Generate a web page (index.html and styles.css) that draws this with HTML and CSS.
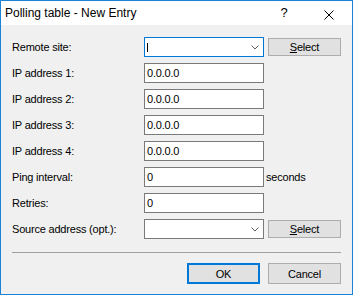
FILE: index.html
```html
<!doctype html>
<html lang="en">
  <head>
    <meta charset="UTF-8" />
    <title>Polling table - New Entry</title>
    <link rel="stylesheet" href="styles.css">
  </head>
  <body>
    <div class="window">
      <div class="titlebar">
        <span class="title">Polling table - New Entry</span>
        <span class="caption-btn help">?</span>
        <span class="caption-btn close">
          <svg width="10" height="10" viewBox="0 0 10 10"><path d="M0.5 0.5 L9.5 9.5 M9.5 0.5 L0.5 9.5" stroke="#000" stroke-width="1" fill="none"/></svg>
        </span>
      </div>
      <div class="content">
        <div class="form">
          <label>Remote site:</label>
          <div class="combo focused">
            <span class="caret"></span>
            <svg class="chevron" width="8" height="5" viewBox="0 0 8 5"><path d="M0.5 0.5 L4 4 L7.5 0.5" stroke="#606060" fill="none"/></svg>
          </div>
          <button class="btn side"><u>S</u>elect</button>

          <label>IP address 1:</label>
          <input type="text" value="0.0.0.0" />
          <span></span>

          <label>IP address 2:</label>
          <input type="text" value="0.0.0.0" />
          <span></span>

          <label>IP address 3:</label>
          <input type="text" value="0.0.0.0" />
          <span></span>

          <label>IP address 4:</label>
          <input type="text" value="0.0.0.0" />
          <span></span>

          <label>Ping interval:</label>
          <input type="text" value="0" />
          <span class="unit">seconds</span>

          <label>Retries:</label>
          <input type="text" value="0" />
          <span></span>

          <label>Source address (opt.):</label>
          <div class="combo">
            <span></span>
            <svg class="chevron" width="8" height="5" viewBox="0 0 8 5"><path d="M0.5 0.5 L4 4 L7.5 0.5" stroke="#606060" fill="none"/></svg>
          </div>
          <button class="btn side"><u>S</u>elect</button>
        </div>

        <div class="separator"></div>

        <div class="actions">
          <button class="btn default">OK</button>
          <button class="btn">Cancel</button>
        </div>
      </div>
    </div>
  </body>
</html>
```

FILE: styles.css
```css
body {
  margin: 0;
  font-family: "Liberation Sans", Arial, sans-serif;
  background-color: #f0f0f0;
}

.window {
  width: 353px;
  height: 295px;
  box-sizing: border-box;
  border: 1px solid #1883d7;
  background-color: #f0f0f0;
}

.titlebar {
  display: flex;
  align-items: center;
  height: 24px;
  background-color: white;
}

.title {
  flex: 1;
  padding-left: 4px;
  font-size: 12px;
  color: #000;
}

.caption-btn {
  width: 46px;
  height: 24px;
  display: flex;
  justify-content: center;
  align-items: center;
}

.help {
  font-size: 13px;
  padding-left: 2px;
  box-sizing: border-box;
  padding-bottom: 1px;
}

.close svg {
  margin-top: 3px;
}

.content {
  padding: 12px 11px 0 11px;
}

.form {
  display: grid;
  grid-template-columns: 132px 120px auto;
  grid-auto-rows: 20px;
  row-gap: 6px;
  align-items: center;
}

label {
  font-size: 11px;
  letter-spacing: -0.2px;
  color: #000;
}

input,
.combo {
  width: 120px;
  height: 20px;
  box-sizing: border-box;
  border: 1px solid #7a7a7a;
  background-color: white;
  margin: 0;
}

input {
  padding: 0 0 0 2px;
  font-family: "Liberation Sans", Arial, sans-serif;
  font-size: 11px;
  letter-spacing: -0.2px;
  color: #000;
  outline: none;
}

.combo {
  display: flex;
  justify-content: space-between;
  align-items: center;
  padding: 0 4px 0 2px;
}

.combo.focused {
  border-color: #0078d7;
}

.caret {
  width: 1px;
  height: 9px;
  background-color: #000;
}

.chevron {
  margin-top: 1px;
}

.unit {
  font-size: 11px;
  letter-spacing: -0.2px;
  margin-left: 2px;
}

.btn {
  width: 73px;
  height: 21px;
  box-sizing: border-box;
  border: 1px solid #adadad;
  background-color: #e1e1e1;
  font-family: "Liberation Sans", Arial, sans-serif;
  font-size: 11px;
  letter-spacing: -0.2px;
  color: #000;
  padding: 0;
  margin: 0;
}

.btn.side {
  height: 18px;
  margin-left: 4px;
  align-self: start;
  margin-top: 1px;
}

.btn.default {
  border: 2px solid #0078d7;
}

.separator {
  margin-top: 13px;
  height: 1px;
  background-color: #a0a0a0;
}

.actions {
  display: flex;
  justify-content: flex-end;
  gap: 8px;
  margin-top: 10px;
}
```
